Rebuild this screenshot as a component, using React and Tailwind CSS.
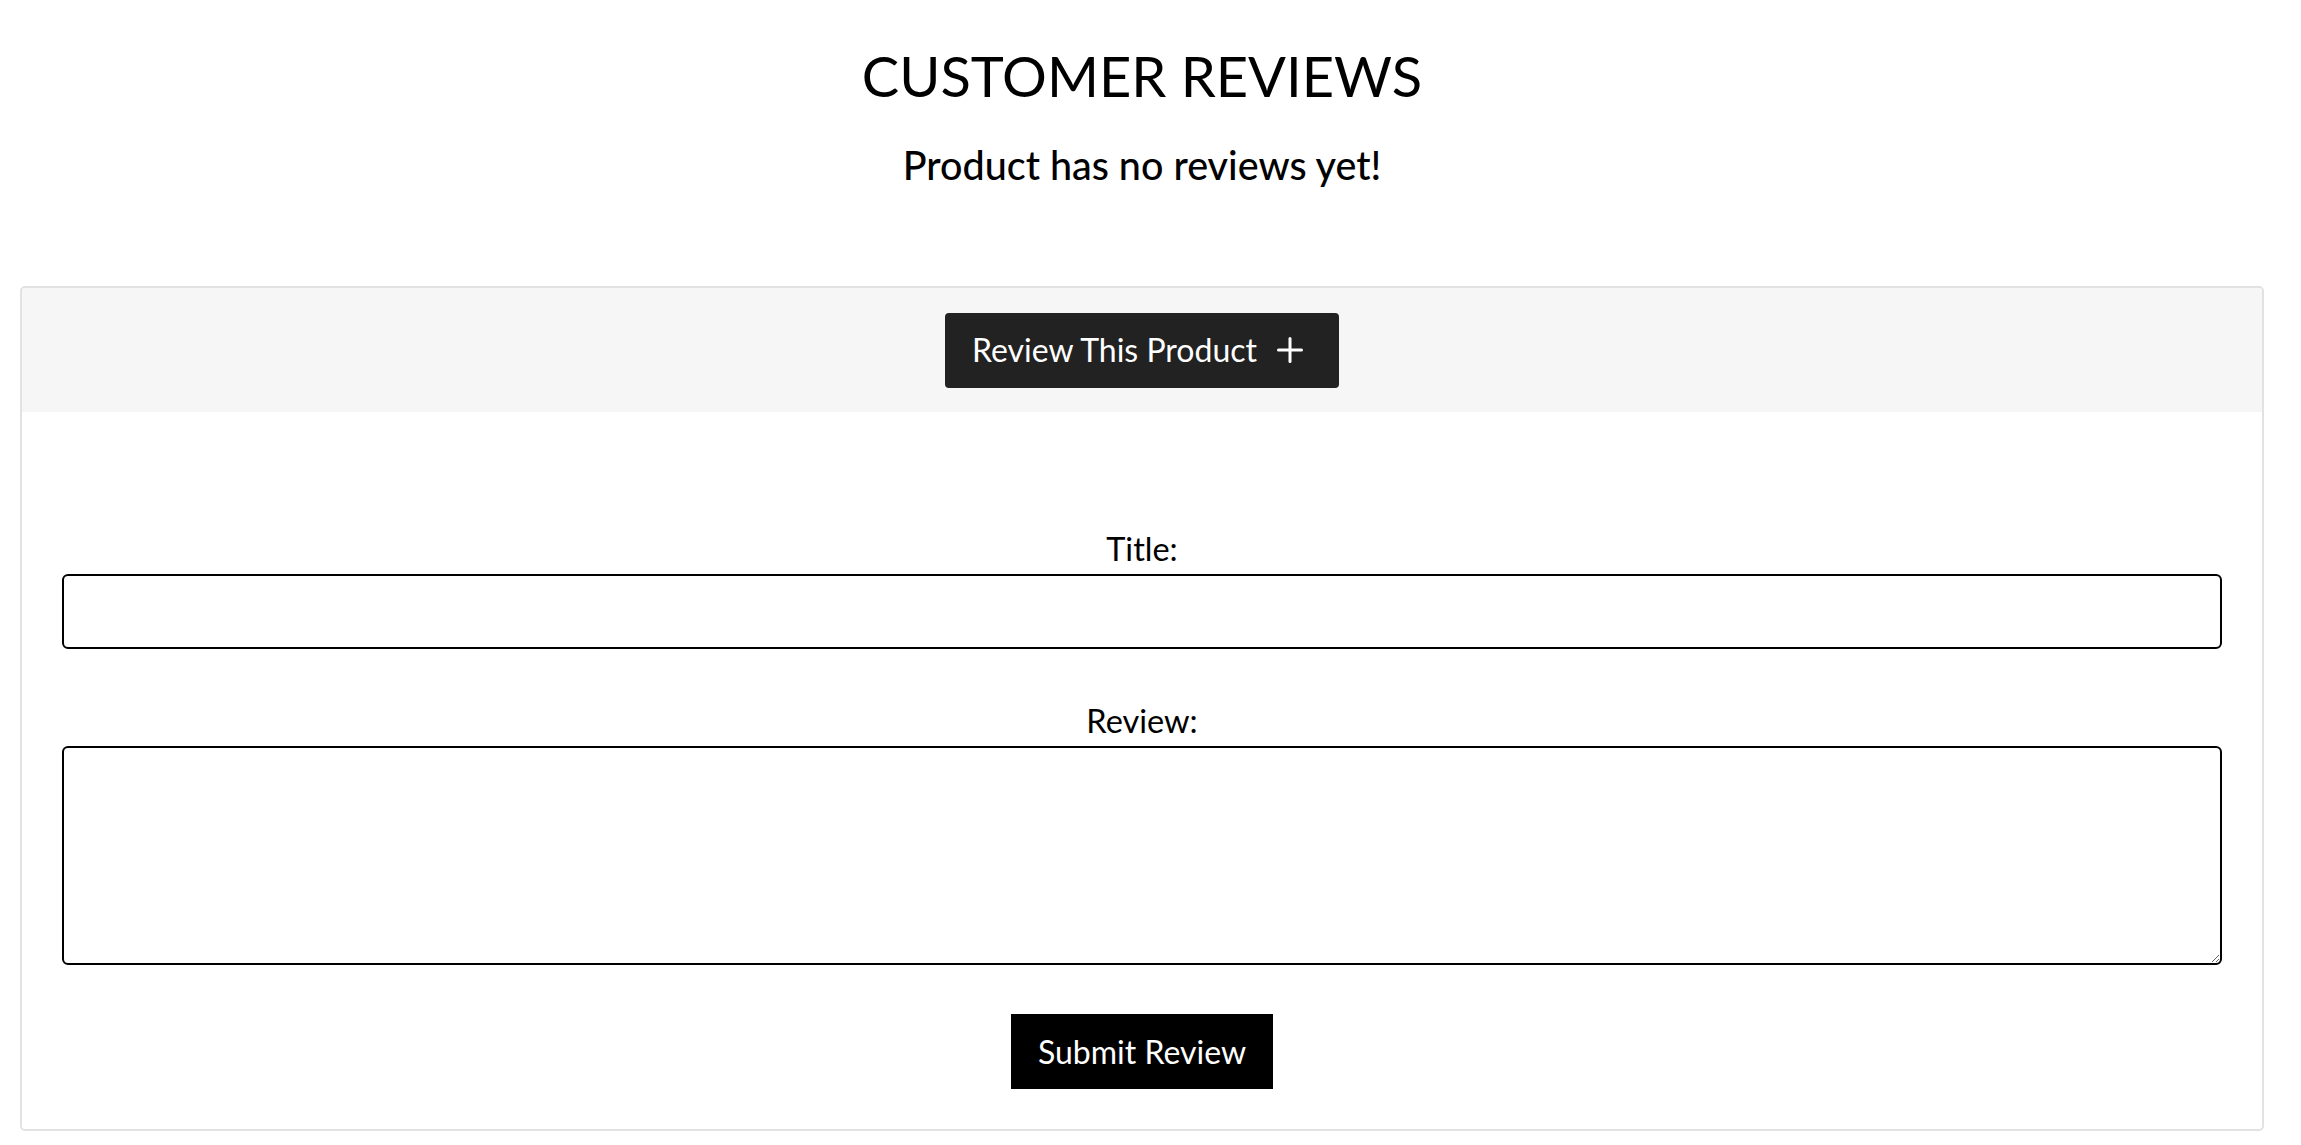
import { useState } from "react";

function PlusIcon() {
    return (
        <svg width="26" height="26" viewBox="0 0 26 26" fill="none" stroke="currentColor" strokeWidth="3" strokeLinecap="round">
            <line x1="13" y1="1.5" x2="13" y2="24.5" />
            <line x1="1.5" y1="13" x2="24.5" y2="13" />
        </svg>
    )
}

export default function App(){

    const [title, setTitle] = useState("")
    const [review, setReview] = useState("")

    return(
        <div className="min-h-screen bg-white text-black font-['Lato','Open_Sans',sans-serif] w-[2284px]">

            <div className="flex flex-col items-center">
                <h1 className="mt-[42px] text-[56px] leading-[67px] font-normal">CUSTOMER REVIEWS</h1>
                <p className="mt-[32px] text-[39.5px] leading-[47px] font-medium">Product has no reviews yet!</p>
            </div>

            <div className="mx-[20px] mt-[98px] border-2 border-[#e2e2e2] rounded-[5px] overflow-hidden">
                <div className="bg-[#f6f6f6] h-[124px] flex items-center justify-center">
                    <button className="h-[75px] bg-[#222222] text-white rounded-[4px] pl-[27px] pr-[36px] flex items-center gap-[20px] text-[32px]">
                        <span>Review This Product</span>
                        <PlusIcon/>
                    </button>
                </div>

                <form className="px-[40px] pt-[118px] pb-[40px] flex flex-col items-center" onSubmit={(e) => e.preventDefault()}>
                    <label htmlFor="title" className="text-[32.5px] leading-[38px]">Title:</label>
                    <input
                        id="title"
                        value={title}
                        onChange={(e) => setTitle(e.target.value)}
                        className="mt-[6px] w-full h-[75px] border-2 border-black rounded-[6px] px-3 text-[28px] outline-none"
                    />

                    <label htmlFor="review" className="mt-[53px] text-[32.5px] leading-[38px]">Review:</label>
                    <textarea
                        id="review"
                        value={review}
                        onChange={(e) => setReview(e.target.value)}
                        className="mt-[6px] w-full h-[219px] border-2 border-black rounded-[6px] px-3 py-2 text-[28px] outline-none block"
                    />

                    <button type="submit" className="mt-[49px] h-[75px] bg-black text-white px-[27px] text-[32px]">Submit Review</button>
                </form>
            </div>
        </div>
    )
}
